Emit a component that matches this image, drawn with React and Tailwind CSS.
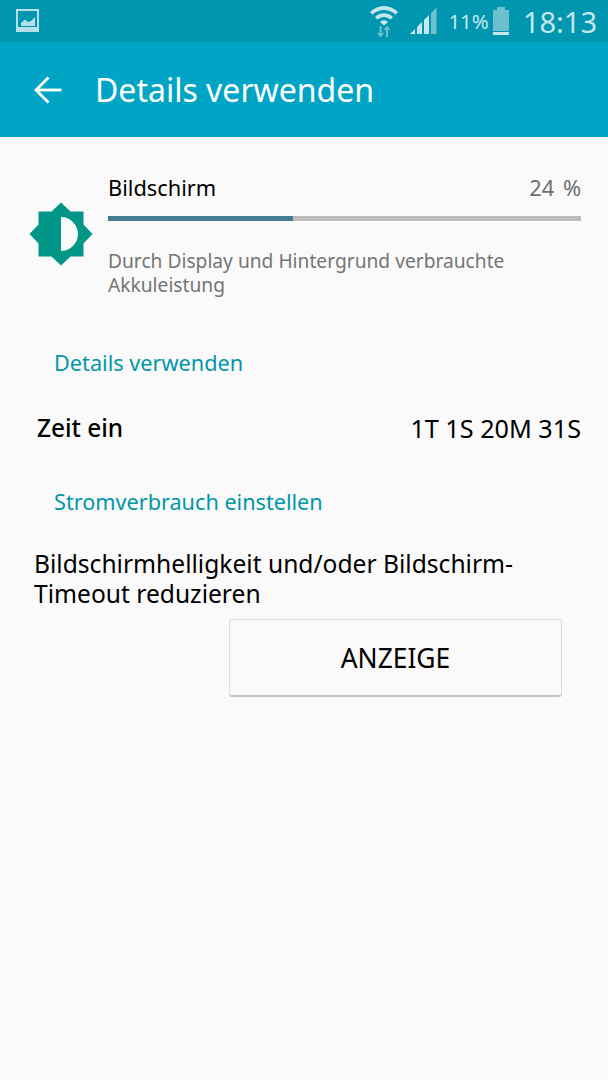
const Sun = () => (
  <svg width="64" height="64" viewBox="0 0 64 64" className="shrink-0">
    <path
      fill="#009688"
      fillRule="evenodd"
      d="M32 0.5 L41.5 9.5 L54.5 9.5 L54.5 22.5 L63.5 32 L54.5 41.5 L54.5 54.5 L41.5 54.5 L32 63.5 L22.5 54.5 L9.5 54.5 L9.5 41.5 L0.5 32 L9.5 22.5 L9.5 9.5 L22.5 9.5 Z M32 15 L32 49 C41 49 49 41.5 49 32 C49 22.5 41 15 32 15 Z"
    />
  </svg>
);

const StatusBar = () => (
  <div className="h-[42px] shrink-0 bg-[#0096b0] flex items-center pl-4 pr-[11px] text-[#c4e8ee]">
    <svg width="24" height="24" viewBox="0 0 24 24">
      <rect x="1" y="1" width="21" height="21" fill="none" stroke="#b5e0e8" strokeWidth="2" />
      <rect x="1" y="18" width="21" height="4" fill="#b5e0e8" />
      <path d="M5 17 L5 14 L9 10.5 L12 13 L15 12 L19 8 L19 17 Z" fill="#b5e0e8" />
    </svg>
    <div className="flex-1" />
    <svg width="30" height="34" viewBox="0 0 30 34" className="mr-[11px]">
      <path d="M1 8 C9 0 21 0 29 8 L26.5 10.5 C20 4.5 10 4.5 3.5 10.5 Z" fill="#c4e8ee" />
      <path d="M6 13 C11 8 19 8 24 13 L21.5 15.5 C17.5 12 12.5 12 8.5 15.5 Z" fill="#c4e8ee" />
      <path d="M11 18 C13.5 15.5 16.5 15.5 19 18 L15 21.5 Z" fill="#c4e8ee" />
      <path d="M10.5 22 V29 H8 L11.5 33.5 L15 29 H12.5 V22 Z" fill="#6fc0cf" />
      <path d="M19 33 V26 H21.5 L18 21.5 L14.5 26 H17 V33 Z" fill="#6fc0cf" />
    </svg>
    <svg width="27" height="28" viewBox="0 0 27 28" className="mr-[11px]">
      <path d="M0 27 L5 22 V27 Z" fill="#c4e8ee" />
      <path d="M7 20 L12 15 V27 H7 Z" fill="#c4e8ee" />
      <path d="M14 13 L19 8 V27 H14 Z" fill="#c4e8ee" />
      <path d="M21 6 L26.5 0.5 V27 H21 Z" fill="#6fc0cf" />
    </svg>
    <span className="text-[20.5px] mr-[3px] leading-none">11%</span>
    <svg width="18" height="28" viewBox="0 0 18 28" className="mr-[13px]">
      <rect x="5" y="0" width="8" height="3" fill="#6fc0cf" />
      <rect x="1" y="3" width="16" height="21" fill="#6fc0cf" />
      <rect x="1" y="25" width="16" height="3" fill="#c4e8ee" />
    </svg>
    <span className="text-[29px] leading-none">18:13</span>
  </div>
);

export default function App() {
  return (
    <div
      className="w-[608px] h-[1080px] flex flex-col bg-[#fafafa] overflow-hidden"
      style={{ fontFamily: '"Noto Sans", sans-serif' }}
    >
      <StatusBar />

      {/* Action bar */}
      <div className="h-[95px] shrink-0 bg-[#00a5c5] flex items-center pl-[34px] text-white">
        <svg width="28" height="28" viewBox="0 0 28 28" fill="none" stroke="white" strokeWidth="2.8">
          <path d="M1.5 14 H27.5" />
          <path d="M14.5 1.5 L2 14 L14.5 26.5" />
        </svg>
        <span className="ml-[33px] text-[32px] leading-none">Details verwenden</span>
      </div>

      {/* Usage row */}
      <div className="flex pl-[29px] pr-[27px] pt-[38px]">
        <div className="pt-[27px]">
          <Sun />
        </div>
        <div className="flex-1 ml-[15px]">
          <div className="flex justify-between items-center h-[26px]">
            <span className="text-[21.8px] text-black">Bildschirm</span>
            <span className="text-[21.8px] text-[#6e6e6e] [word-spacing:3px]">24 %</span>
          </div>
          <div className="mt-[15px] h-[5px] bg-[#bdbdbd]">
            <div className="h-full w-[185px] bg-[#437f91]" />
          </div>
          <p className="mt-[28px] text-[19.2px] leading-[24px] text-[#757575]">
            Durch Display und Hintergrund verbrauchte Akkuleistung
          </p>
        </div>
      </div>

      <div className="mt-[51px] pl-[54px] text-[21.7px] leading-[30px] text-[#0097a7]">Details verwenden</div>

      <div className="mt-[34px] flex justify-between pl-[37px] pr-[27px] leading-[32px] text-black">
        <span className="font-medium text-[24.4px]">Zeit ein</span>
        <span className="text-[25.2px]">1T 1S 20M 31S</span>
      </div>

      <div className="mt-[43px] pl-[54px] text-[21.65px] leading-[30px] text-[#0097a7]">Stromverbrauch einstellen</div>

      <p className="mt-[32px] pl-[34px] pr-[60px] text-[24.6px] leading-[30px] text-black">
        Bildschirmhelligkeit und/oder Bildschirm-Timeout reduzieren
      </p>

      <div className="mt-[10px] flex justify-end pr-[46px]">
        <button className="w-[333px] h-[78px] pt-[2px] rounded-[3px] border border-[#dcdcdc] border-b-2 border-b-[#c4c4c4] bg-[#fafafa] text-[26.4px] text-black">
          ANZEIGE
        </button>
      </div>
    </div>
  );
}
